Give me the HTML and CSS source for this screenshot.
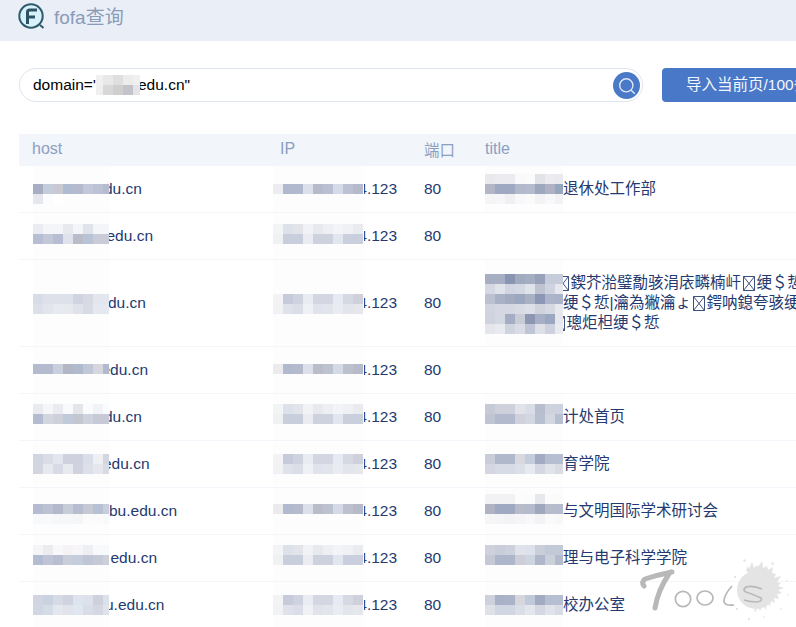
FILE: index.html
```html
<!DOCTYPE html>
<html lang="zh-CN">
<head>
<meta charset="utf-8">
<title>fofa查询</title>
<link rel="stylesheet" href="styles.css">
</head>
<body>
<header class="topbar">
  <svg class="logo" width="28" height="30" viewBox="0 0 28 30" aria-hidden="true">
    <circle cx="13" cy="14" r="11.7" fill="#d8f2fb" stroke="#2f5a6c" stroke-width="2"/>
    <path d="M22 23l3.5 3" stroke="#2f5a6c" stroke-width="2" fill="none"/>
    <path d="M9.5 22V10.2Q9.5 8 11.7 8H19M9.5 15h7.5" stroke="#2c5266" stroke-width="3" fill="none"/>
  </svg>
  <span class="brand">fofa查询</span>
</header>
<section class="search-row">
  <div class="query">
    <span class="query-text">domain="</span>
    <span class="mosaic mosaic-query" data-top="5" data-px="f0f0f0 e8e8e8 dfdfdf ececec f0f0f0|efefef d8d8d8 cfcfcf c2c3cb e4e4e6"></span>
    <span class="query-text query-end">edu.cn"</span>
    <button class="search-btn" type="button" aria-label="搜索">
      <svg width="27" height="27" viewBox="0 0 27 27" aria-hidden="true">
        <circle cx="13.3" cy="13.3" r="6.6" fill="none" stroke="#dfe8f7" stroke-width="1.4"/>
        <path d="M18.2 18.2l3.6 3.6" stroke="#dfe8f7" stroke-width="1.4"/>
      </svg>
    </button>
  </div>
  <button class="import-btn" type="button">导入当前页/100条</button>
</section>
<section class="results">
  <div class="row head">
    <div class="head-host">host</div>
    <div class="head-ip">IP</div>
    <div class="head-cjk">端口</div>
    <div>title</div>
  </div>

  <div class="row">
    <div class="cell host"><span class="mosaic m-host" data-top="18" data-px="a8adc4 c3cddc c9c9d4 afbbd0 b5bbcc c2c8d7 bcc2d3 b4bcd0|e6e7ee fbfcfe ffffff fdfdfe fdfdfe fdfdfe fdfdfe fdfdfe"></span><span class="shift-5">du.cn</span></div>
    <div class="cell"><span class="mosaic m-ip" data-top="18" data-px="ecedf0 b0b9cd b0b9cd dce0ea b6bbcc b9c0d1 d5dbe8 bcc2d3 b6bbcc"></span><span class="ip-end">4.123</span></div>
    <div class="cell">80</div>
    <div class="cell"><span class="mosaic m-title" data-top="8" data-px="e9e9ee ebebf0 ebebf0 f9f9fb fbfbfc e2e2e9 ebebf0 e9e9ee|b3b6c6 9fa9c1 9fa9c1 b2b9ca b4bbcd 9da8be aeb2c2 97a6bf|f5f5f7 f6f6f8 f0f0f3 f8f8fa fafafb f3f3f6 f8f8fa f3f3f6"></span><span>退休处工作部</span></div>
  </div>

  <div class="row">
    <div class="cell host"><span class="mosaic m-host" data-top="11" data-px="ebecf1 f4f5f8 f4f5f8 e8e9ee f4f5f8 e0e3ec f4f5f8 f4f5f8|b7bed3 c2c8d7 b7bed3 e0e3ec bbbcc9 b9c3d6 c9ccd8 c9ccd8"></span><span class="shift-2">edu.cn</span></div>
    <div class="cell"><span class="mosaic m-ip" data-top="11" data-px="f3f4f5 dde2ea e2e4ea f0f2f6 e7e9ef edeff3 f2f4f8 eff1f4 e9ebef|f0f1f3 c8cedc c8cedc eaecf1 cdd2de cdd2de e2e6ef c9cfdd c9cfdd"></span><span class="ip-end">4.123</span></div>
    <div class="cell">80</div>
    <div class="cell"></div>
  </div>

  <div class="row">
    <div class="cell host"><span class="mosaic m-host" data-top="34" data-px="d8dce6 dee1ea dee1ea dde1ea d0d3e0 d9d9e3 e3e6ef e3e6ef|dde0e9 e3e5ee e8eaf2 e8e9ee dfe2ea d9dbe4 e6e8f1 e6e8f1"></span><span class="shift-1">du.cn</span></div>
    <div class="cell"><span class="mosaic m-ip" data-top="34" data-px="f3f3f5 c5cbda cfd3df e9ecf2 d4d6e1 d4d6e1 e6eaf2 d6d9e4 ced1dc|f1f2f4 dfe2eb dbdee8 f0f1f5 e0e3ec e3e5ec ebecf1 e3e5ec e5e7ec"></span><span class="ip-end">4.123</span></div>
    <div class="cell">80</div>
    <div class="cell"><span class="mosaic m-title" data-top="14" data-px="a7adc3 a7adc3 8794b2 a0abc0 a3aec3 99a1ba c6ccd9 c6ccd9|d5d8e3 e1e3ea d0d5e1 d3d8e2 dfe3ea bfc3d1 ced3df e6e8ee|bcc1d1 a9b1c7 a3abc2 9ba7bf a9b2c5 8c97b5 acb5c9 a9b4ca|d0d4df d5d8e2 d5d8e2 d8dbe4 dcdfe7 d0d3dd d6d9e2 e8e9ee|cfd3de d4d8e2 a3adc4 c8ccd7 8d97b2 a6afc5 9ba6c0 e5e7ec|e4e6ec e8eaef d0d4df d9dce4 bfc5d4 dee0e8 ced2de e9ebef"></span>
      <div class="title-lines">
        <div class="line line-a"><svg class="tofu" viewBox="0 0 12 15" aria-hidden="true"><path d="M.5.5h11v14H.5zM.5.5l11 14M11.5.5l-11 14"/></svg>鍥芥湁璧勪骇涓庡疄楠屽<svg class="tofu" viewBox="0 0 12 15" aria-hidden="true"><path d="M.5.5h11v14H.5zM.5.5l11 14M11.5.5l-11 14"/></svg>绠＄悊</div>
        <div class="line line-b">绠＄悊|瀹為獙瀹ょ<svg class="tofu" viewBox="0 0 12 15" aria-hidden="true"><path d="M.5.5h11v14H.5zM.5.5l11 14M11.5.5l-11 14"/></svg>鍔呐鎴夸骇绠</div>
        <div class="line line-c"><svg class="tofu" viewBox="0 0 12 15" aria-hidden="true"><path d="M.5.5h11v14H.5zM.5.5l11 14M11.5.5l-11 14"/></svg>璁炬柦绠＄悊</div>
      </div>
    </div>
  </div>

  <div class="row">
    <div class="cell host"><span class="mosaic m-host" data-top="17" data-px="b5bbce b5bbce c9cfdc b3b7c5 b0bbcd c0c7d6 d6d6de b0bace"></span><span class="shift-7">edu.cn</span></div>
    <div class="cell"><span class="mosaic m-ip" data-top="17" data-px="ebebee b0b9cd b5bbcc dce0ea bbbcca bdc2d1 d4dae6 bcc0cf b6bac9"></span><span class="ip-end">4.123</span></div>
    <div class="cell">80</div>
    <div class="cell"></div>
  </div>

  <div class="row">
    <div class="cell host"><span class="mosaic m-host" data-top="10" data-px="e9ebf0 f5f6f8 e9ebf0 f8f9fb e4e5ea fafbfc f2f3f6 fafbfc|b3bcd0 d3d5df ced0db c0cadb c4c6d0 cdd2de c7cad6 c7cbd8"></span><span class="shift-5">du.cn</span></div>
    <div class="cell"><span class="mosaic m-ip" data-top="10" data-px="f3f4f5 dde2ea e2e4ea f0f2f6 e7e9ef edeff3 f2f4f8 eff1f4 e9ebef|f0f1f3 c8cedc c8cedc eaecf1 cdd2de cdd2de e2e6ef c9cfdd c9cfdd"></span><span class="ip-end">4.123</span></div>
    <div class="cell">80</div>
    <div class="cell"><span class="mosaic m-title" data-top="10" data-px="c6c9d6 ced1dc cdd1dc e2e3ea d9dde7 b9bece cdd2de ccd2de|c0c5d3 b3bacd b3bacd cfd2dd d2d7e2 b8bfd0 d3d7e0 b7c0d1"></span><span>计处首页</span></div>
  </div>

  <div class="row">
    <div class="cell host"><span class="mosaic m-host" data-top="13" data-px="d2d6e1 dadde7 e3e6ef cfd2de cfd2de dadee8 eff0f3 d2d6e1|d3d6e1 e8e9ef d8dbe6 e9eaef d0d3df dde0e9 e6e7ec d8dae4"></span><span class="shift-6">edu.cn</span></div>
    <div class="cell"><span class="mosaic m-ip" data-top="13" data-px="f3f3f5 c5cbda cfd3df e9ecf2 d4d6e1 d4d6e1 e6eaf2 d6d9e4 ced1dc|f1f2f4 dfe2eb dbdee8 f0f1f5 e0e3ec e3e5ec ebecf1 e3e5ec e5e7ec"></span><span class="ip-end">4.123</span></div>
    <div class="cell">80</div>
    <div class="cell"><span class="mosaic m-title" data-top="13" data-px="c9cdd9 b0b8cc b0b8cc d8d8de c3cedd a3abc3 b5bfd1 b5bfd1|d4d7e2 d7dbe5 d7dbe5 dcdfe7 e6e9ef d5d8e3 e0e3e9 d9dce5"></span><span>育学院</span></div>
  </div>

  <div class="row">
    <div class="cell host"><span class="mosaic m-host" data-top="16" data-px="b5bbd0 bdc2d3 b4b8cb c7ccd9 b7bcd0 c6c8d3 b6c1d4 c7cfdd|f8f9fb f8f9fb f6f7f9 f6f7f9 f5f6f8 fbfbfc fbfbfc f8f9fb"></span><span>bu.edu.cn</span></div>
    <div class="cell"><span class="mosaic m-ip" data-top="16" data-px="ebebee b0b9cd b5bbcc dce0ea bbbcca bdc2d1 d4dae6 bcc0cf b6bac9"></span><span class="ip-end">4.123</span></div>
    <div class="cell">80</div>
    <div class="cell"><span class="mosaic m-title" data-top="6" data-px="f2f2f5 f2f2f5 f2f2f5 fcfcfd fbfbfc e7e8ed fbfbfc fbfbfc|b0b3c3 9fa9c1 9fa9c1 b8bbc9 b5bbcc 9fa7bf b7bccc b5bcce|f6f6f8 f5f5f7 f3f3f6 f5f5f7 f8f8fa f3f3f6 fafafb f8f8fa"></span><span>与文明国际学术研讨会</span></div>
  </div>

  <div class="row">
    <div class="cell host"><span class="mosaic m-host" data-top="10" data-px="f5f5f7 ebecf0 f8f8fa f5f3f6 f6f6f8 eeeff3 f8f9fb f8f9fb|b3bcd1 bfc5d6 b9bfd1 c9cedb c3cddc c0c6d6 c6cad6 ccd0db"></span><span class="shift2">edu.cn</span></div>
    <div class="cell"><span class="mosaic m-ip" data-top="10" data-px="f3f4f5 dde2ea e2e4ea f0f2f6 e7e9ef edeff3 f2f4f8 eff1f4 e9ebef|f0f1f3 c8cedc c8cedc eaecf1 cdd2de cdd2de e2e6ef c9cfdd c9cfdd"></span><span class="ip-end">4.123</span></div>
    <div class="cell">80</div>
    <div class="cell"><span class="mosaic m-title" data-top="10" data-px="cfd2dd c9cdd9 cdd1dc e1e3ea dde1ea c9ced9 c3cad7 c3cad7|c5c9d6 aeb6cb aeb6cb cccfda cfd5e0 b0b7ca ccd0db b3bbcd"></span><span>理与电子科学学院</span></div>
  </div>

  <div class="row">
    <div class="cell host"><span class="mosaic m-host" data-top="13" data-px="d0d5e1 c9d3df d5dae5 cfd3df dde4ee dde1eb ced1dc d9e1eb|d1d6e3 d4dce8 e5e7ee e1e3ea e0e7f0 d9dde8 d5d8e3 dfe3ec"></span><span class="shift-4">u.edu.cn</span></div>
    <div class="cell"><span class="mosaic m-ip" data-top="13" data-px="f3f3f5 c5cbda cfd3df e9ecf2 d4d6e1 d4d6e1 e6eaf2 d6d9e4 ced1dc|f1f2f4 dfe2eb dbdee8 f0f1f5 e0e3ec e3e5ec ebecf1 e3e5ec e5e7ec"></span><span class="ip-end">4.123</span></div>
    <div class="cell">80</div>
    <div class="cell"><span class="mosaic m-title" data-top="13" data-px="cdd1dc a9b1c7 abb3c8 d6d7dd bfc9d9 a3abc3 b5bfd1 b5bfd1|dfe1e8 d0d6e2 d0d6e2 dadee7 e3e6ed d5d8e3 e0e3e9 d9dce5"></span><span>校办公室</span></div>
  </div>
</section>

<svg class="watermark" width="176" height="77" viewBox="0 0 176 77" aria-hidden="true">
  <path fill="#e4e4e4" d="M126 20l2-4 1 3 3-7 2 6 3-3 1 2 4-6 1 7 4-2 1 4 5-3-1 6 4 1-2 4 7-2-4 6 4 1-3 3 6 2-6 2 4 3-5 1 2 5-5-1 1 5-4-2-1 5-3-3-1 7-3-5-3 6-2-5-3 7-1-7-3 2-1-5-4 3 1-6-5 2 2-5-6 0 4-4-5-2 5-2-3-4 5 0-2-5 5 1-1-5 5 2z"/>
  <circle cx="136" cy="40" r="19" fill="#e4e4e4"/>
  <path fill="#e4e4e4" d="M124 9l2 1-1 2-2-1zM152 12l2 1-1 2-2-1zM166 30l2 1-1 1-1-1zM116 58l2 0 0 2-2 0zM128 68l2 0 0 2-2 0zM160 58l2 1-1 1-1-1zM168 44l1 1-1 1-1-1zM114 26l2 0 0 2-2 0zM144 66l1 1-1 1-1-1z"/>
  <path d="M24 36q-3-4 1-7 12-4 27-7-4 1-3 2-11 16-14 34" fill="none" stroke="#b8b8b8" stroke-width="5" stroke-linecap="round" stroke-linejoin="round"/>
  <circle cx="63" cy="49" r="7.7" fill="none" stroke="#b8b8b8" stroke-width="1.7"/>
  <ellipse cx="85" cy="48" rx="8" ry="7" fill="none" stroke="#b8b8b8" stroke-width="1.7"/>
  <path d="M112 36q-8 9-8 15 0 5 10 4" fill="none" stroke="#b8b8b8" stroke-width="1.7"/>
  <path d="M142 39q-9-4-16-2-4 3 0 5 6 2 15 6 2 3-4 4-7 0-13-2" fill="none" stroke="#b8b8b8" stroke-width="1.7"/>
</svg>
<script src="mosaic.js"></script>
</body>
</html>
```
FILE: styles.css
```css
* { box-sizing: border-box; }
html, body { margin: 0; height: 627px; overflow: hidden; background: #fff; }
body {
  position: relative;
  width: 796px;
  font: 15.5px/20px "Liberation Sans", "Noto Sans CJK SC", sans-serif;
  color: #24396f;
}
.topbar {
  height: 41px;
  background: #e9eef7;
  padding-left: 18px;
  display: flex;
  align-items: center;
  gap: 8px;
}
.logo { flex: none; margin-top: -7px; }
.brand { font-size: 19px; color: #8a9bb9; margin-top: -5px; }

.search-row {
  display: flex;
  gap: 19px;
  margin: 27px 0 32px 19px;
  width: 900px;
}
.query {
  flex: none;
  width: 624px;
  height: 34px;
  border: 1px solid #dfe5f0;
  border-radius: 17px;
  padding: 0 2px 0 13px;
  display: flex;
  align-items: center;
  color: #000;
}
.query-text { white-space: pre; }
.query-end { margin-left: -2px; }
.search-btn {
  margin-left: auto;
  width: 27px;
  height: 27px;
  padding: 0;
  border: 0;
  border-radius: 50%;
  background: #4a79c8;
}
.search-btn svg { display: block; }
.import-btn {
  flex: none;
  width: 200px;
  height: 34px;
  border: 0;
  border-radius: 4px;
  background: #4a78c8;
  color: #f2f6fc;
  font: 15.5px/34px "Liberation Sans", "Noto Sans CJK SC", sans-serif;
  text-align: left;
  padding: 0 0 0 24px;
}

.results { margin-left: 19px; width: 777px; }
.row {
  display: grid;
  grid-template-columns: 254px 151px 61px 311px;
  min-height: 47px;
  border-bottom: 1px solid #f4f5fa;
}
.head {
  min-height: 32px;
  height: 32px;
  background: #f2f5fa;
  border-bottom: 0;
  color: #8d9fc0;
  font-size: 16px;
  line-height: 30px;
}
.head-host { padding-left: 13px; }
.head-ip { padding-left: 7px; }
.head-cjk { font-size: 15.5px; line-height: 34px; }
.cell {
  display: flex;
  align-items: center;
  white-space: nowrap;
  min-width: 0;
}
.host { padding-left: 14px; }

.mosaic {
  position: relative;
  z-index: 1;
  flex: none;
  align-self: stretch;
  background: #fdfdfe;
  overflow: hidden;
}
.mosaic-grid {
  display: grid;
  grid-auto-rows: 10px;
  grid-template-columns: repeat(var(--cols, 8), 10px);
}
.m-host { width: 76px; }
.m-ip { width: 91px; --cols: 9; }
.m-title { width: 78px; }
.mosaic-query {
  align-self: center;
  width: 44px;
  height: 30px;
  margin-left: -2.4px;
  --cols: 5;
  background: #fff;
}
.mosaic-query .mosaic-grid { margin-left: -3px; }

.ip-end { margin-left: -5.7px; }
.shift-7 { margin-left: -7.5px; }
.shift-6 { margin-left: -6px; }
.shift-5 { margin-left: -5px; }
.shift-4 { margin-left: -4px; }
.shift-2 { margin-left: -2.5px; }
.shift-1 { margin-left: -1px; }
.shift2 { margin-left: 1.5px; }

.title-lines { padding: 13px 0; }
.line { height: 20px; }
.line-a { margin-left: -8px; }
.line-c { margin-left: -12px; }
.tofu {
  display: inline-block;
  width: 12px;
  height: 15px;
  margin: 0 1.75px;
  vertical-align: -2.5px;
  fill: none;
  stroke: #3c5080;
  stroke-width: 1;
}

.watermark {
  position: absolute;
  left: 620px;
  top: 550px;
  z-index: 2;
}
```
FILE: mosaic.js
```js
document.querySelectorAll('.mosaic').forEach(function (box) {
  var grid = document.createElement('div');
  grid.className = 'mosaic-grid';
  grid.style.marginTop = box.dataset.top + 'px';
  box.dataset.px.split('|').forEach(function (row) {
    row.split(' ').forEach(function (hex) {
      var cell = document.createElement('i');
      cell.style.background = '#' + hex;
      grid.appendChild(cell);
    });
  });
  box.appendChild(grid);
});
```
